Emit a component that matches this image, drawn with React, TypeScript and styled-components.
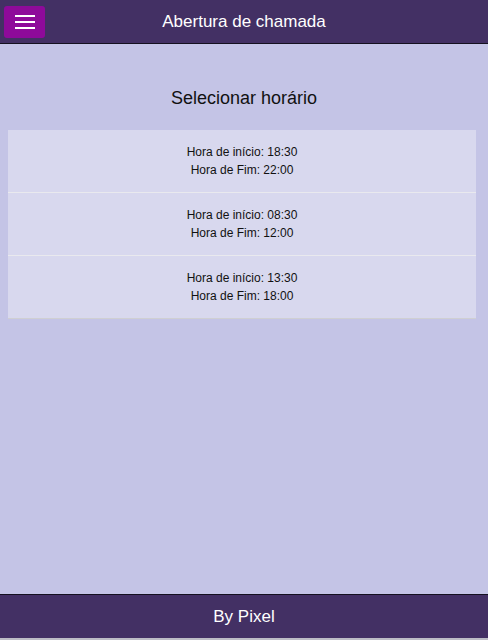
import React from "react";
import styled, { createGlobalStyle } from "styled-components";

const Global = createGlobalStyle`
  html, body { margin: 0; padding: 0; }
  body {
    font-family: "Liberation Sans", Arial, sans-serif;
    background: #c4c4e6;
  }
`;

const Page = styled.div`
  display: flex;
  flex-direction: column;
  min-height: 100vh;
  background: #c4c4e6;
`;

const Header = styled.header`
  display: grid;
  grid-template-columns: 1fr auto 1fr;
  align-items: center;
  height: 43px;
  background: #433064;
  border-bottom: 1px solid #151020;
`;

const MenuButton = styled.button`
  justify-self: start;
  margin-left: 4px;
  width: 41px;
  height: 32px;
  border: none;
  border-radius: 3px;
  background: #8e0a9a;
  display: flex;
  flex-direction: column;
  align-items: center;
  justify-content: center;
  gap: 4px;
  padding: 0;
  cursor: pointer;
`;

const Bar = styled.span`
  display: block;
  width: 20px;
  height: 2px;
  background: #ffffff;
`;

const HeaderTitle = styled.h1`
  margin: 0;
  color: #ffffff;
  font-size: 17px;
  font-weight: normal;
  line-height: 20px;
`;

const Main = styled.main`
  flex: 1;
  display: flex;
  flex-direction: column;
  padding: 43px 12px 0 8px;
`;

const Title = styled.h2`
  margin: 0 0 21px 4px;
  text-align: center;
  font-size: 18px;
  font-weight: normal;
  line-height: 22px;
  color: #111111;
`;

const List = styled.ul`
  list-style: none;
  margin: 0;
  padding: 0;
`;

const Row = styled.li<{ $last?: boolean }>`
  box-sizing: content-box;
  height: 49px;
  padding: 13px 0 0;
  background: #d8d8ee;
  border-bottom: 1px solid ${(p) => (p.$last ? "#cfcfd2" : "#e9e9ee")};
  display: flex;
  flex-direction: column;
  align-items: center;
  font-size: 12px;
  line-height: 18px;
  color: #111111;
`;

const Footer = styled.footer`
  height: 43px;
  background: #433064;
  border-top: 1px solid #151020;
  border-bottom: 2px solid #bdbdc6;
  display: flex;
  align-items: center;
  justify-content: center;
  color: #ffffff;
  font-size: 17px;
`;

const slots = [
  { start: "18:30", end: "22:00" },
  { start: "08:30", end: "12:00" },
  { start: "13:30", end: "18:00" },
];

export default function App() {
  return (
    <>
      <Global />
      <Page>
        <Header>
          <MenuButton aria-label="Menu">
            <Bar />
            <Bar />
            <Bar />
          </MenuButton>
          <HeaderTitle>Abertura de chamada</HeaderTitle>
          <span />
        </Header>
        <Main>
          <Title>Selecionar horário</Title>
          <List>
            {slots.map((s, i) => (
              <Row key={i} $last={i === slots.length - 1}>
                <span>Hora de início: {s.start}</span>
                <span>Hora de Fim: {s.end}</span>
              </Row>
            ))}
          </List>
        </Main>
        <Footer>By Pixel</Footer>
      </Page>
    </>
  );
}
